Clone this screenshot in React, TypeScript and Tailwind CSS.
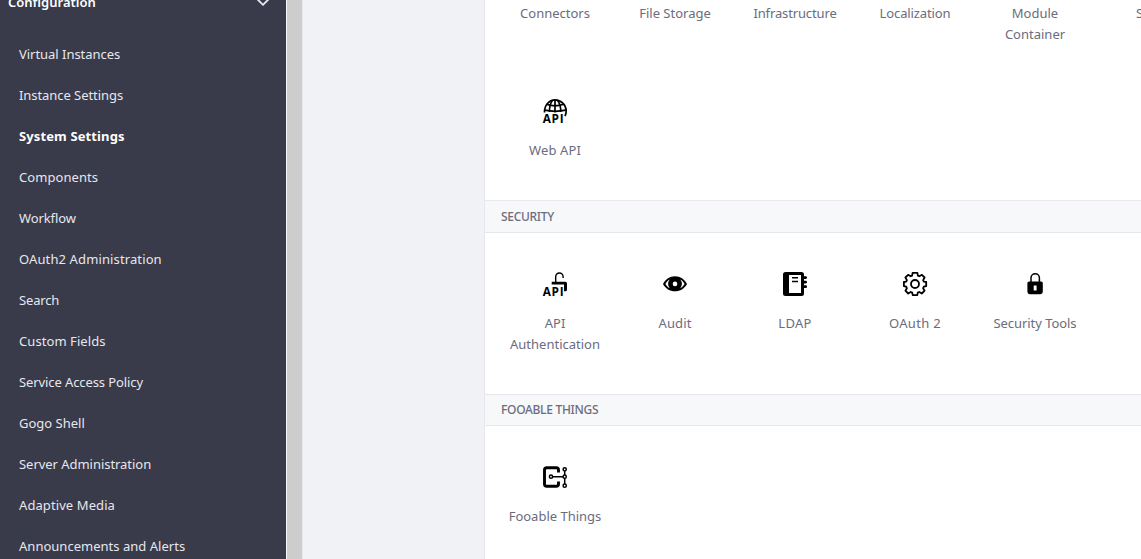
import type { ReactNode } from 'react';

type MenuItem = { label: string; tracking?: string };

const menu: MenuItem[] = [
  { label: 'Virtual Instances', tracking: 'tracking-[-0.03px]' },
  { label: 'Instance Settings', tracking: 'tracking-[-0.06px]' },
  { label: 'System Settings', tracking: 'tracking-[0.12px] font-bold text-white' },
  { label: 'Components', tracking: 'tracking-[0.07px]' },
  { label: 'Workflow', tracking: 'tracking-[-0.1px]' },
  { label: 'OAuth2 Administration', tracking: 'tracking-[0.12px]' },
  { label: 'Search', tracking: 'tracking-[-0.15px]' },
  { label: 'Custom Fields', tracking: 'tracking-[0.07px]' },
  { label: 'Service Access Policy', tracking: 'tracking-[-0.1px]' },
  { label: 'Gogo Shell' },
  { label: 'Server Administration', tracking: 'tracking-[-0.04px]' },
  { label: 'Adaptive Media', tracking: 'tracking-[0.09px]' },
  { label: 'Announcements and Alerts', tracking: 'tracking-[0.02px]' },
];

function ApiText() {
  return (
    <text x="-0.3" y="23.7" fontSize="11.8" fontWeight="700" textLength="21" lengthAdjust="spacing" className="font-['Open_Sans',sans-serif]">
      API
    </text>
  );
}

function Icon({ children }: { children: ReactNode }) {
  return (
    <svg width="24" height="24" viewBox="0 0 24 24" fill="#000" className="block overflow-visible">
      {children}
    </svg>
  );
}

function GlobeApiIcon() {
  return (
    <Icon>
      <g fill="none" stroke="#000" strokeWidth="1.7">
        <path d="M1.500 13.500C1.300 6.500 6 .9 12 .9s11.200 5 11.200 11.200c0 2-.4 3.500-1.200 5" />
        <path d="M12 .9v12.600M3.500 5.300c5 1.800 12 1.800 17 0M1.700 11.200c6 1.300 15 1.300 21 0" />
        <path d="M9.500 1.200C7 4.500 6.300 8 6.500 13M14.500 1.200C17 4.500 17.900 8 17.700 13" />
      </g>
      <ApiText />
    </Icon>
  );
}

function LockApiIcon() {
  return (
    <Icon>
      <path d="M12.700 11V4.700a3.700 3.700 0 0 1 7.400 0V6" fill="none" stroke="#000" strokeWidth="1.400" />
      <path d="M8.700 9.700h13.600q1.700 0 1.700 1.700v6.300q0 1.600-1.600 1.600h-1.400v-6.700H8.700z" />
      <ApiText />
    </Icon>
  );
}

function EyeIcon() {
  return (
    <Icon>
      <path fillRule="evenodd" d="M0 11.900C2.500 7.300 6.700 4.300 12 4.300s9.500 3 12 7.600c-2.500 4.600-6.700 7.300-12 7.300S2.500 16.500 0 11.900zm2.400 0c1.200 2 2.500 3.300 4.300 4.200a7.200 7.200 0 0 1 0-8.600C4.900 8.500 3.600 9.900 2.400 11.900zm19.200 0c-1.200-2-2.500-3.400-4.300-4.400a7.200 7.200 0 0 1 0 8.600c1.800-.9 3.100-2.200 4.300-4.200zM12 9.600a2.300 2.300 0 1 0 0 4.600 2.300 2.300 0 0 0 0-4.600z" />
    </Icon>
  );
}

function BookIcon() {
  return (
    <Icon>
      <path fillRule="evenodd" d="M2.500 0h16A2.500 2.500 0 0 1 21 2.500v19a2.500 2.500 0 0 1-2.500 2.500h-16A2.500 2.500 0 0 1 0 21.500v-19A2.500 2.500 0 0 1 2.500 0zM6 3v18h12V3z" />
      <path d="M9 5.700h6M9 9.500h6" stroke="#000" strokeWidth="1.400" />
      <path d="M21 5.600h1.700M21 10.100h1.700M21 14.700h1.700" stroke="#000" strokeWidth="2.700" strokeLinecap="round" />
    </Icon>
  );
}

function GearIcon() {
  return (
    <Icon>
      <g fill="none" stroke="#000" strokeWidth="1.800" strokeLinejoin="round">
        <path d="M9.600.9h4.800l.5 2.700 1.500.7 2.500-1.500 2.700 2.700-1.500 2.600.7 1.500 2.400.4v4.200l-2.400.5-.7 1.600 1.500 2.400-2.800 2.800-2.500-1.500-1.500.6-.5 2.500H9.700l-.5-2.500-1.500-.6-2.500 1.500-2.800-2.800 1.500-2.400-.7-1.600-2.300-.5V10l2.300-.4.7-1.500-1.500-2.600 2.700-2.700 2.500 1.500 1.500-.7z" />
        <circle cx="12" cy="12" r="4" />
      </g>
    </Icon>
  );
}

function PadlockIcon() {
  return (
    <Icon>
      <path d="M8 10V6a4.200 4.200 0 0 1 8.400 0V10" fill="none" stroke="#000" strokeWidth="1.500" />
      <path fillRule="evenodd" d="M6 9.400h12.200a1.600 1.600 0 0 1 1.600 1.600v8.800a2.400 2.400 0 0 1-2.400 2.400H6.800a2.400 2.400 0 0 1-2.400-2.400V11A1.600 1.600 0 0 1 6 9.400zm4.700 4.100v4.900h2.900v-4.900z" />
    </Icon>
  );
}

function PluginIcon() {
  return (
    <Icon>
      <path d="M15.500 7.500V5q0-2.300-2.300-2.300H3.800Q1.500 2.700 1.500 5v14q0 2.300 2.300 2.300h9.400q2.300 0 2.300-2.300v-2.500" fill="none" stroke="#000" strokeWidth="2.900" />
      <path d="M8 11.700h14M21.700 4.500v16" stroke="#000" strokeWidth="1.500" />
      <g fill="#fff" stroke="#000" strokeWidth="1.500">
        <circle cx="8" cy="11.700" r="1.600" />
        <circle cx="21.700" cy="4.300" r="1.600" />
        <circle cx="21.700" cy="11.700" r="1.600" />
        <circle cx="21.700" cy="20.700" r="1.600" />
      </g>
    </Icon>
  );
}

function Tile({ icon, lines, className = '' }: { icon?: ReactNode; lines: string[]; className?: string }) {
  return (
    <div className={`flex w-[120px] shrink-0 flex-col items-center ${className}`}>
      {icon && <div className="mb-[17px] h-6 w-6">{icon}</div>}
      {lines.map((line) => (
        <div key={line} className="h-[21px] whitespace-nowrap text-center leading-[21px]">
          {line}
        </div>
      ))}
    </div>
  );
}

function SectionHeader({ title }: { title: string }) {
  return (
    <h2 className="flex h-full items-center border-y border-[#e7e7ed] bg-[#f7f8f9] pl-4 text-[12px] font-medium tracking-[-0.3px] text-[#6b6c7e]">
      {title}
    </h2>
  );
}

export default function App() {
  return (
    <div className="flex h-[559px] w-full overflow-hidden bg-[#f1f2f5] font-['Noto_Sans',sans-serif] text-[13px]">
      <nav className="w-[286px] shrink-0 overflow-hidden bg-[#393a4a] text-[#e7e7ed]">
        <div className="flex h-[34px] justify-between pl-2 pr-[17px] text-white">
          <span className="-mt-2 font-semibold leading-[21px]">Configuration</span>
          <svg width="12" height="7" viewBox="0 0 12 7" className="mt-[-1px]" fill="none" stroke="#e7e7ed" strokeWidth="1.800">
            <path d="M.7.500 6 5.800 11.300.500" />
          </svg>
        </div>
        <ul>
          {menu.map((item) => (
            <li key={item.label} className={`flex h-[41px] items-center whitespace-nowrap pl-[19px] ${item.tracking ?? ''}`}>
              {item.label}
            </li>
          ))}
        </ul>
      </nav>
      <div className="w-[17px] shrink-0 border-x border-l-[#f7f7f7] border-r-[#e7e7ed] bg-[#cdcdcd]" />
      <div className="w-[181px] shrink-0" />
      <main className="min-w-0 flex-1 overflow-hidden border-l border-[#e7e7ed] bg-white text-[#6b6c7e]">
        <div className="flex h-[99px] pl-[10px] pt-[3px]">
          <Tile lines={['Connectors']} />
          <Tile lines={['File Storage']} />
          <Tile lines={['Infrastructure']} className="tracking-[-0.13px]" />
          <Tile lines={['Localization']} className="tracking-[-0.12px]" />
          <Tile lines={['Module', 'Container']} />
          <Tile lines={['Search']} className="tracking-[-0.5px]" />
        </div>
        <div className="flex h-[101px] pl-[10px]">
          <Tile icon={<GlobeApiIcon />} lines={['Web API']} className="tracking-[0.1px]" />
        </div>
        <div className="h-[33px]">
          <SectionHeader title="SECURITY" />
        </div>
        <div className="flex h-[161px] pl-[10px] pt-[39px]">
          <Tile icon={<LockApiIcon />} lines={['API', 'Authentication']} />
          <Tile icon={<EyeIcon />} lines={['Audit']} className="tracking-[0.15px]" />
          <Tile icon={<BookIcon />} lines={['LDAP']} className="tracking-[0.3px]" />
          <Tile icon={<GearIcon />} lines={['OAuth 2']} className="tracking-[0.3px]" />
          <Tile icon={<PadlockIcon />} lines={['Security Tools']} className="tracking-[-0.06px]" />
        </div>
        <div className="h-[32px]">
          <SectionHeader title="FOOABLE THINGS" />
        </div>
        <div className="flex pl-[10px] pt-[39px]">
          <Tile icon={<PluginIcon />} lines={['Fooable Things']} />
        </div>
      </main>
    </div>
  );
}
